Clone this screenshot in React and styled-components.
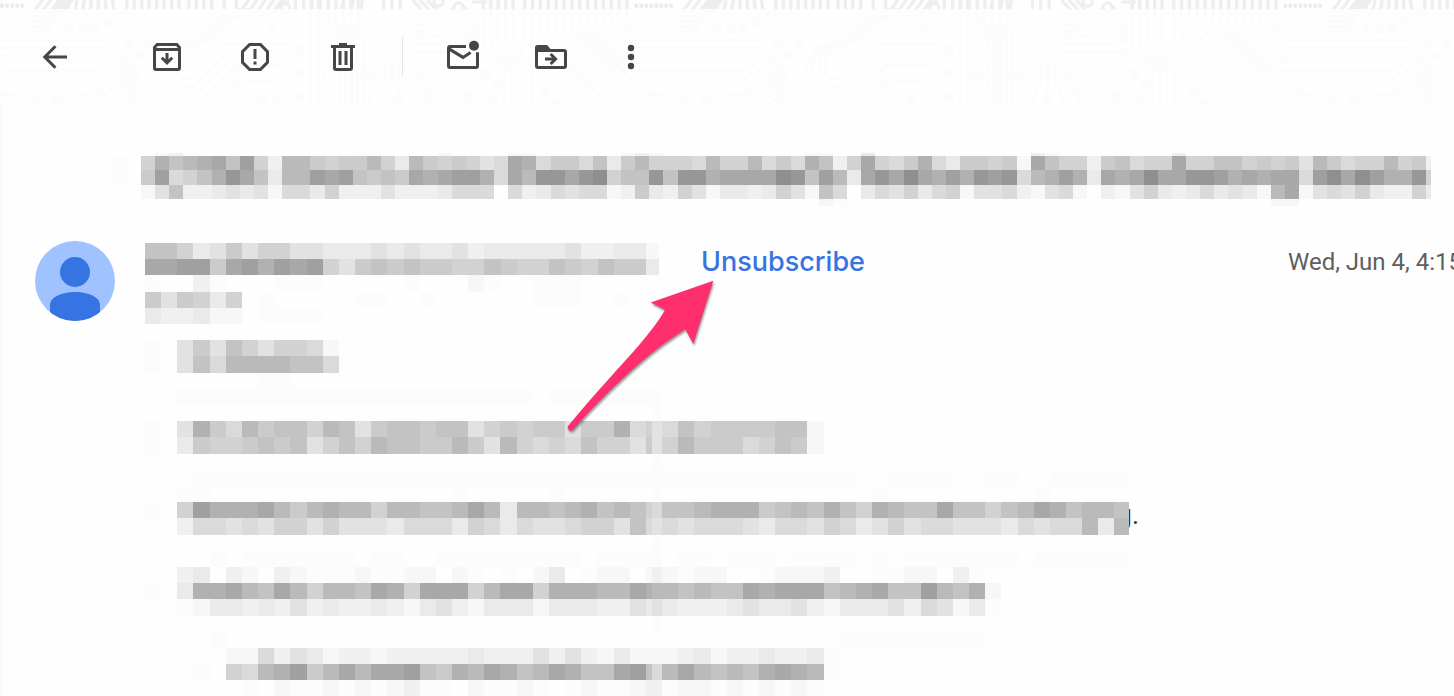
import React from "react";
import styled, { createGlobalStyle } from "styled-components";

const GlobalStyle = createGlobalStyle`
  body {
    margin: 0;
    background: #fefefe;
    font-family: Inter, "Open Sans", sans-serif;
    overflow-x: hidden;
  }
`;

const Page = styled.div`
  position: relative;
  overflow: hidden;
  background: linear-gradient(#fafafa, #fafafa) 0 0 / 3px 100% no-repeat #fefefe;
`;

const Backdrop = styled.svg`
  position: absolute;
  top: 0;
  left: 0;
  width: 100%;
  height: 104px;
`;

const Toolbar = styled.header`
  position: relative;
  display: flex;
  align-items: center;
  height: 40px;
  padding: 37px 35px 27px;
`;

const ToolGroup = styled.div`
  display: flex;
  gap: ${(props) => props.$gap}px;
  margin-left: ${(props) => props.$before || 0}px;
`;

const ToolButton = styled.button`
  width: 40px;
  height: 40px;
  padding: 0;
  border: none;
  background: none;
  color: #444746;
  cursor: pointer;
  svg {
    display: block;
    width: 40px;
    height: 40px;
  }
`;

const Divider = styled.div`
  width: 1px;
  height: 40px;
  margin: 0 40px 0 39px;
  background: #e6e6e6;
`;

const Subject = styled.h2`
  display: flex;
  margin: 0;
  padding: 49px 0 35px 113px;
`;

const Message = styled.article`
  position: relative;
  padding-left: 35px;
`;

const MessageHeader = styled.div`
  display: flex;
  align-items: flex-start;
  height: 83px;
`;

const Avatar = styled.svg`
  flex: none;
  width: 80px;
  height: 80px;
  margin-right: 30px;
`;

const Sender = styled.div`
  flex: none;
  padding-top: 2px;
  margin-right: 42px;
`;

const Unsubscribe = styled.button`
  padding: 0;
  border: none;
  background: none;
  color: #3574e2;
  font-family: inherit;
  font-size: 27px;
  font-weight: 500;
  line-height: 42px;
  cursor: pointer;
`;

const DateText = styled.time`
  flex: none;
  width: 166px;
  margin-left: auto;
  overflow: hidden;
  color: #5e5e5e;
  font-family: Roboto, sans-serif;
  font-size: 24px;
  line-height: 42px;
  white-space: nowrap;
`;

const Body = styled.div`
  padding-left: 110px;
`;

const Paragraph = styled.p`
  display: flex;
  margin: 0;
`;

const Tail = styled.span`
  display: flex;
  justify-content: flex-end;
  width: 10px;
  overflow: hidden;
  color: #333;
  font-family: Roboto, sans-serif;
  font-size: 27px;
  line-height: 58px;
`;

const MosaicSvg = styled.svg`
  display: block;
  flex: none;
`;

const Arrow = styled.svg`
  position: absolute;
  top: 35px;
  left: 560px;
  width: 160px;
  height: 160px;
  filter: drop-shadow(1px 2px 1px rgba(0, 0, 0, 0.4));
  pointer-events: none;
`;

// one character per cell, light to dark
const SHADES = {
  "-": "#fcfcfc",
  1: "#f7f7f7",
  2: "#f0f0f0",
  3: "#e9ebea",
  4: "#e2e2e2",
  5: "#dadada",
  6: "#d2d2d2",
  7: "#cbcbcb",
  8: "#c3c3c3",
  9: "#bababa",
  a: "#b1b1b1",
  b: "#a8a8a8",
  c: "#a0a0a0",
  d: "#979797",
  e: "#908e8f",
};

const SUBJECT = [
  " 12-           --    1    11      121          11  3           21        2   --",
  "6a89ab8c629976779639767645ba5775837966659669575a826b657a5377671b866278566b668867674975669672",
  "7c568adb8399cbc8787babcca5b9ddbde688d8ddabbbbed8c93bdbebacadcd59aca3babebbddcababb5cebecaad6",
  "1482234341553622242223555 5235455127326413323641850354635614452145102146323534319b1454632263",
  "                                                1-                              11",
];

const SENDER = [
  "88634746644333434334233333422331",
  "bbcc7bcacbc647878776687668768773",
  "-  2-   ---     -   1-  ---",
  "747636 -     --  -      ---  -",
  "322311 ----",
];

const PARAGRAPHS = [
  {
    rows: [
      "",
      "- 4748646651",
      "- 4859999885",
      "       --",
      "  ---------------------- -------",
    ],
  },
  {
    rows: [
      "",
      "- 4a7597886984788788467677477a565867777881",
      "- 3766787846869887797496565866476977756871",
      "",
      "   -----------------------------------------  ----  --  -------",
    ],
    seam: "-44- ",
  },
  {
    rows: [
      "  --               -     -                   -         -",
      "- 6caaab979a99699889b939989a8986889aaa7898a86a988b88689ba8998",
      "  25545466464443555365354456648554555435546534645544435455939",
      "",
      "    - ------- --  --------- ---- -- --- ---- - ------- ------",
    ],
    seam: "-54- ",
  },
  {
    rows: [
      "  23 21 21---1--11 1- - 13 -11 11-11  -1112  --11 2-",
      "- 3aab98b96998ba6bbb69bb6aaa99ba98988babbb89ab88c98a1",
      "  -1332324232232134213331333224332223433421333425413-",
      "",
      "    -                                      ---------",
    ],
    seam: "294- ",
  },
  {
    rows: [
      "     1152431221222223222424213111231223223-",
      "   - 659ac79b9bbc87a9ba89ba88bc89b9898aba9-",
      "      - 1--1-1-12-- 1--1- -1--12-11-1-1-1-",
    ],
    seam: "152",
  },
];

const Mosaic = ({ rows, cols, top = 0, height = rows.length, seam = "", width, pixels }) => (
  <MosaicSvg
    width={width}
    height={pixels}
    viewBox={`0 ${top} ${cols} ${height}`}
    preserveAspectRatio="none"
    shapeRendering="crispEdges"
    aria-hidden="true"
  >
    {rows.map((row, y) =>
      [...row].map(
        (level, x) =>
          SHADES[level] && (
            <rect key={`${x}-${y}`} x={x} y={y} width="1" height="1" fill={SHADES[level]} />
          )
      )
    )}
    {[...seam].map(
      (level, y) =>
        SHADES[level] && (
          <rect key={y} x="31.4" y={y} width="0.6" height="1" fill={SHADES[level]} />
        )
    )}
  </MosaicSvg>
);

const Icon = ({ children }) => (
  <svg viewBox="0 0 20 20" fill="none" stroke="currentColor" strokeWidth="1.5">
    {children}
  </svg>
);

const BackIcon = () => (
  <Icon>
    <path d="M16 10H5M10.2 4.6 4.9 10l5.3 5.4" />
  </Icon>
);

const ArchiveIcon = () => (
  <Icon>
    <path d="M3.75 5.3 5.1 3.75h9.8l1.35 1.55v10.2a.75.75 0 0 1-.75.75h-11a.75.75 0 0 1-.75-.75zM3.75 6.2h12.5" />
    <path d="M10 8v4.8M7.4 10.4 10 13l2.6-2.6" />
  </Icon>
);

const SpamIcon = () => (
  <Icon>
    <path d="M7.3 3.75h5.4l3.55 3.55v5.4l-3.55 3.55H7.3L3.75 12.7V7.3z" />
    <path d="M10 6v5M10 12.3v1.5" />
  </Icon>
);

const TrashIcon = () => (
  <Icon>
    <path d="M4 4.75h12M8 3.75h4M5.75 5v10.5c0 .5.3.75.75.75h7c.5 0 .75-.25.75-.75V5M8.5 7v7M11.5 7v7" />
  </Icon>
);

const UnreadIcon = () => (
  <Icon>
    <path d="M11.5 4.75h-8a.75.75 0 0 0-.75.75v9c0 .5.3.75.75.75h13c.5 0 .75-.3.75-.75V7.6" />
    <path d="M2.8 5.8 10 10.2l3.8-2.5" />
    <circle cx="15.5" cy="4.4" r="2.5" fill="currentColor" stroke="none" />
  </Icon>
);

const MoveIcon = () => (
  <Icon>
    <path d="M2 7V5.2C2 4.5 2.5 4 3.2 4H8l2 2.2V7z" fill="currentColor" stroke="none" />
    <path d="M2.75 6.75H16.5c.5 0 .75.3.75.75v7c0 .5-.3.75-.75.75h-13a.75.75 0 0 1-.75-.75z" />
    <path d="M7 11h5M9.8 8.5l2.5 2.5-2.5 2.5" />
  </Icon>
);

const MoreIcon = () => (
  <Icon>
    {[5.5, 10, 14.5].map((y) => (
      <circle key={y} cx="10" cy={y} r="1.6" fill="currentColor" stroke="none" />
    ))}
  </Icon>
);

const range = (count) => Array.from({ length: count }, (_, i) => i);

// circuit board traces, one tile is 1568 units wide
const TRACES = [
  ...range(7).map((i) => `M0 ${97 + i * 18}H${305 - i * 8}L375 ${185 + i * 16}`),
  ...range(6).map((i) => `M475 ${190 + i * 18}H${500 + i * 8}L${585 + i * 8} ${105 + i * 18}H${745 - i * 10}`),
  ...range(4).map((i) => `M${418 + i * 16} 182V${150 - i * 4}L${450 + i * 10} ${112 - i * 2}H${500 + i * 8}L${570 + i * 14} 40H690L725 0`),
  "M790 0V316M808 0V316",
  ...range(5).map((i) => `M${832 + i * 18} 0V${50 + i * 4}L${860 + i * 14} 90V316`),
  ...range(5).map((i) => `M1040 ${60 + i * 16}H1065L${1090 + i * 4} ${45 + i * 20}H1185`),
  ...range(4).map((i) => `M${970 + i * 16} 155V195L${930 + i * 36} 240V316`),
  ...range(5).map((i) => `M${1206 + i * 18} 0V${110 - i * 4}L${1256 + i * 17} 170V316`),
  ...range(14).map((i) => `M${1306 + i * 19} 0V${95 - i * 4}L${1526 + i * 19} ${315 - i * 4}`),
  ...range(4).map((i) => `M105 ${40 + i * 12}H150L${190 + i * 8} 0`),
  "M30 228H75L95 245H125M0 272H150M175 245H205L225 228H270L330 310M1058 180H1095L1110 168H1210",
  "M1075 230V270L1045 316M1168 235V270L1140 316M1200 270V316M1240 290V316",
].join("");

// the strip along the top edge carries more, shorter traces
const EDGE_TRACES = [
  ...range(4).map((i) => `M${120 + i * 20} 27 ${142 + i * 20} 0`),
  ...range(7).map((i) => `M${208 + i * 17} 0 ${200 + i * 19} 27`),
  ...range(8).map((i) => `M${345 + i * 18} 0V27`),
  ...range(3).map((i) => `M${495 + i * 18} 0V27M${550 + i * 30} 0V27`),
  ...range(5).map((i) => `M${620 + i * 20} 27 ${640 + i * 20} 0`),
  ...range(6).map((i) => `M${732 + i * 20} 0V27`),
  ...range(3).map((i) => `M${870 + i * 22} 0 ${862 + i * 24} 27`),
  ...range(3).map((i) => `M${965 + i * 20} 0V27`),
  ...range(3).map((i) => `M${1035 + i * 18} 0 ${1060 + i * 18} 27`),
  "M1125 27 1150 8 1170 27M1180 5H1215M640 24H612",
].join("");

const DOTS = [
  [205, 70], [236, 72], [266, 70], [301, 55], [350, 105], [400, 105], [376, 135], [425, 78],
  [697, 62], [762, 120], [762, 175], [762, 235], [762, 300], [610, 205], [672, 240],
  [710, 235], [930, 178], [1055, 180], [1213, 180], [1238, 205], [1230, 245], [1075, 228],
  [1168, 230], [1185, 62], [1185, 95], [1185, 130], [1000, 245], [1025, 275], [1355, 225],
  [1380, 250], [40, 228], [125, 245], [150, 272], [172, 245], [1418, 302], [1200, 268],
];

const Circuit = () => (
  <Backdrop aria-hidden="true">
    <defs>
      <pattern id="circuit" x="-16" width="649" height="104" patternUnits="userSpaceOnUse">
        <g transform="scale(0.414)">
          <path d={TRACES} fill="none" stroke="#eeeeee" strokeWidth="8" />
          <path d={EDGE_TRACES} fill="none" stroke="#eeeeee" strokeWidth="8" />
          {DOTS.map(([x, y]) => (
            <circle key={`${x}-${y}`} cx={x} cy={y} r="12" fill="#eeeeee" />
          ))}
          {[135, 183, 232, 280].map((y) => (
            <circle key={y} cx="833" cy={y} r="12" fill="#fefefe" stroke="#eeeeee" strokeWidth="8" />
          ))}
          {[[335, 40], [1098, 4], [1146, 18], [728, 20], [40, 305], [92, 305]].map(([x, y]) => (
            <circle key={x} cx={x} cy={y} r="11" fill="#fefefe" stroke="#eeeeee" strokeWidth="7" />
          ))}
          <circle cx="222" cy="312" r="34" fill="none" stroke="#eeeeee" strokeWidth="9" />
          <path d="M0 18h105v47H0zM388 185h84v105h-84zM953 45h84v105h-84z" fill="#fefefe" />
          <path d="M4 14h96" stroke="#eaeaea" strokeWidth="10" strokeDasharray="8 4" />
        </g>
      </pattern>
    </defs>
    <rect width="100%" height="104" fill="url(#circuit)" />
    <rect y="9" width="100%" height="95" fill="#fefefe" fillOpacity="0.86" />
  </Backdrop>
);

const App = () => (
  <Page>
    <GlobalStyle />
    <Circuit />
    <Toolbar>
      <ToolGroup $gap={0}>
        <ToolButton aria-label="Back"><BackIcon /></ToolButton>
      </ToolGroup>
      <ToolGroup $gap={48} $before={72}>
        <ToolButton aria-label="Archive"><ArchiveIcon /></ToolButton>
        <ToolButton aria-label="Report spam"><SpamIcon /></ToolButton>
        <ToolButton aria-label="Delete"><TrashIcon /></ToolButton>
      </ToolGroup>
      <Divider />
      <ToolGroup $gap={48}>
        <ToolButton aria-label="Mark as unread"><UnreadIcon /></ToolButton>
        <ToolButton aria-label="Move to"><MoveIcon /></ToolButton>
      </ToolGroup>
      <ToolGroup $gap={0} $before={40}>
        <ToolButton aria-label="More"><MoreIcon /></ToolButton>
      </ToolGroup>
    </Toolbar>
    <Subject aria-label="Subject">
      <Mosaic rows={["", "-", "-"]} cols={2} top={0.8} height={3.7} width={28} pixels={53} />
      <Mosaic rows={SUBJECT} cols={91.35} top={0.8} height={3.7} width={1290} pixels={53} />
    </Subject>
    <Message>
      <MessageHeader>
        <Avatar viewBox="0 0 80 80" aria-hidden="true">
          <clipPath id="avatar">
            <circle cx="40" cy="40" r="40" />
          </clipPath>
          <g clipPath="url(#avatar)">
            <rect width="80" height="80" fill="#a0c2ff" />
            <circle cx="40" cy="31" r="15" fill="#3574e2" />
            <path d="M15 80V64c0-8 12-13 25-13s25 5 25 13v16z" fill="#3574e2" />
          </g>
        </Avatar>
        <Sender>
          <Mosaic rows={SENDER} cols={31.8} width={514} pixels={81} />
        </Sender>
        <Unsubscribe>Unsubscribe</Unsubscribe>
        <DateText>Wed, Jun 4, 4:15</DateText>
      </MessageHeader>
      <Body>
        {PARAGRAPHS.map(({ rows, seam }, index) => (
          <Paragraph key={index}>
            <Mosaic
              rows={rows}
              cols={60.9}
              seam={seam}
              width={984}
              pixels={rows.length === 5 ? 81 : 48}
            />
            {index === 2 && <Tail>g.</Tail>}
          </Paragraph>
        ))}
      </Body>
      <Arrow viewBox="560 276 160 160" aria-hidden="true">
        <path
          d="M713.3 280.7 650.7 302.5 665 310C658 322 650 332 640 344 621 366 596 392 568.5 425.5A3 3 0 0 0 573 429.5C595 405 617 383 640 363 656 349 670 339 685.3 329.3L693.3 344z"
          fill="#ff2f6e"
        />
      </Arrow>
    </Message>
  </Page>
);

export default App;
